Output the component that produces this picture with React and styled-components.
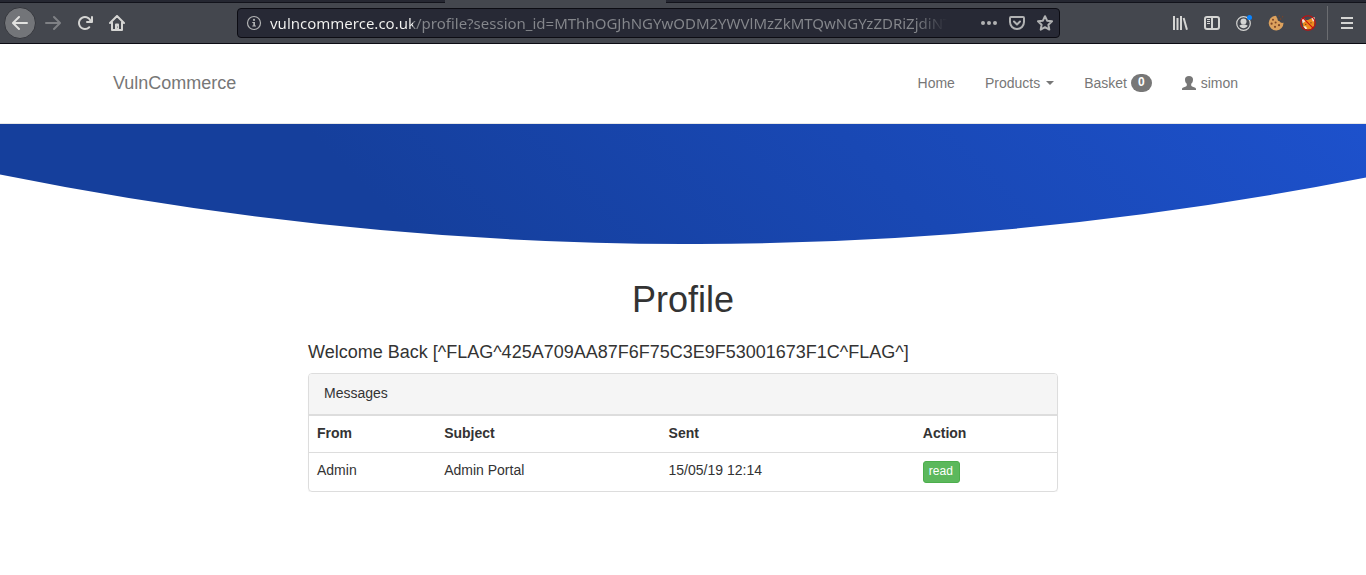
import React from 'react';
import styled, { createGlobalStyle, css } from 'styled-components';

const GlobalStyle = createGlobalStyle`
  *, *::before, *::after { box-sizing: border-box; }
  body {
    margin: 0;
    background: #fff;
    color: #333;
    font-family: "Liberation Sans", Arial, sans-serif;
    font-size: 14px;
    line-height: 20px;
  }
`;

/* ---------- browser chrome ---------- */

const TabStrip = styled.div`
  display: flex;
  height: 3px;
  background: #44474e;
`;

const TabEdge = styled.div`
  width: ${(p) => p.$width || 'auto'};
  flex: ${(p) => (p.$width ? '0 0 auto' : '1')};
  background: ${(p) => (p.$active ? '#44474e' : '#252731')};
  border-bottom: ${(p) => (p.$active ? 'none' : '1px solid #12131b')};
`;

const Toolbar = styled.div`
  display: flex;
  align-items: center;
  height: 41px;
  padding: 0 3px 0 4px;
  background: #44474e;
  border-bottom: 1px solid #0c0c13;
`;

const ToolButton = styled.button`
  display: flex;
  align-items: center;
  justify-content: center;
  flex: none;
  width: 32px;
  height: 32px;
  padding: 0;
  border: 0;
  background: none;
  color: ${(p) => (p.$dim ? '#7f8185' : '#d5d5d3')};
  ${(p) =>
    p.$round &&
    css`
      border: 1px solid #35373d;
      border-radius: 50%;
      background: #737579;
      color: #e2e2e0;
    `}
`;

const NavButtons = styled.div`
  display: flex;
  flex: none;
  margin-right: 104px;
  & > :first-child { margin-right: 1px; }
`;

const AddressBar = styled.form`
  display: flex;
  align-items: center;
  flex: 1;
  min-width: 0;
  height: 30px;
  margin: 0 104px 0 0;
  padding: 0 0 0 8px;
  border: 1px solid #0c0c13;
  border-radius: 4px;
  background: #272935;
`;

const AddressInput = styled.input`
  flex: 1;
  min-width: 0;
  height: 28px;
  margin: 0 28px 0 8px;
  padding: 0;
  border: 0;
  outline: 0;
  font: 15px/28px "Noto Sans", sans-serif;
  color: #f4f4f2;
  background: linear-gradient(90deg, #f4f4f2 143px, #85878c 143px, #85878c calc(100% - 32px), #272935);
  background-clip: text;
  -webkit-text-fill-color: transparent;
`;

const AddressAction = styled.button`
  display: flex;
  align-items: center;
  justify-content: center;
  flex: none;
  width: ${(p) => (p.$narrow ? '16px' : '28px')};
  height: 28px;
  padding: 0;
  border: 0;
  background: none;
  color: #b1b2b3;
`;

const ToolGroup = styled.div`
  display: flex;
  align-items: center;
  flex: none;
`;

const Separator = styled.span`
  width: 1px;
  height: 34px;
  margin: 0 3px;
  background: #6b6d71;
`;

const Icon = ({ children, ...rest }) => (
  <svg width="16" height="16" viewBox="0 0 16 16" fill="currentColor" aria-hidden="true" {...rest}>
    {children}
  </svg>
);

const ArrowIcon = ({ flip }) => (
  <Icon>
    <path
      transform={flip ? 'translate(16 0) scale(-1 1)' : undefined}
      d="M15 7H3.414l4.293-4.293a1 1 0 0 0-1.414-1.414l-6 6a1 1 0 0 0 0 1.414l6 6a1 1 0 0 0 1.414-1.414L3.414 9H15a1 1 0 0 0 0-2z"
    />
  </Icon>
);

const ReloadIcon = () => (
  <Icon>
    <path d="M15 1a1 1 0 0 0-1 1v2.418A6.995 6.995 0 1 0 8 15a6.954 6.954 0 0 0 4.95-2.05 1 1 0 0 0-1.414-1.414A5.019 5.019 0 1 1 12.549 6H10a1 1 0 0 0 0 2h5a1 1 0 0 0 1-1V2a1 1 0 0 0-1-1z" />
  </Icon>
);

const HomeIcon = () => (
  <Icon fill="none" stroke="currentColor" strokeWidth="2" strokeLinecap="round" strokeLinejoin="round">
    <path d="M1 8l7-7 7 7M3 7.500V15h10V7.500" />
    <path d="M7 14.500V9.500h2V14.500" strokeWidth="2" />
    <circle cx="8.500" cy="12" r=".5" fill="#44474e" stroke="none" />
  </Icon>
);

const InfoIcon = () => (
  <Icon>
    <circle cx="8" cy="8" r="6.500" fill="none" stroke="currentColor" strokeWidth="1.200" />
    <circle cx="8" cy="4.900" r="1.100" />
    <path d="M6.300 7H9v3.500h1v1H6.300v-1h1V8h-1z" />
  </Icon>
);

const DotsIcon = () => (
  <Icon>
    <circle cx="2" cy="8" r="2" />
    <circle cx="8" cy="8" r="2" />
    <circle cx="14" cy="8" r="2" />
  </Icon>
);

const PocketIcon = () => (
  <Icon fill="none" stroke="currentColor" strokeWidth="2" strokeLinecap="round" strokeLinejoin="round">
    <path d="M2 2h12a1 1 0 0 1 1 1v4a7 7 0 0 1-14 0V3a1 1 0 0 1 1-1z" />
    <path d="M5 6.500l3 3 3-3" />
  </Icon>
);

const StarIcon = () => (
  <Icon fill="none" stroke="currentColor" strokeWidth="2" strokeLinejoin="round">
    <path d="M8 1.200l2.100 4.500 4.900.6-3.600 3.400.9 4.900L8 12.200l-4.300 2.400.9-4.900L1 6.300l4.900-.6z" />
  </Icon>
);

const LibraryIcon = () => (
  <Icon>
    <path d="M1 1h2v14H1zM4.500 3h2v12h-2zM8 1h2v14H8z" />
    <path d="M10.700 3.300l1.900-.6 3.300 11.700-1.900.6z" />
  </Icon>
);

const SidebarIcon = () => (
  <Icon fill="none" stroke="currentColor" strokeWidth="2">
    <rect x="1" y="2" width="14" height="12" rx="2" />
    <path d="M8 2v12" strokeWidth="2" />
    <path d="M3 4.500h3M3 6.500h3M3 8.500h3" strokeWidth="1" />
  </Icon>
);

const AccountIcon = () => (
  <Icon>
    <circle cx="7.500" cy="8.500" r="6.800" fill="none" stroke="currentColor" strokeWidth="1.200" />
    <circle cx="7.500" cy="6.500" r="3" />
    <path d="M3.300 10.800c1-.9 1.800-1 2.700-1.300h3c.9.300 1.700.4 2.700 1.300-.9 1.500-2.400 2.400-4.200 2.400s-3.300-.9-4.200-2.400z" />
    <circle cx="13.500" cy="2.500" r="2.500" fill="#0a84ff" />
  </Icon>
);

const CookieIcon = () => (
  <Icon>
    <path
      d="M7.500.700C9 1.300 8.500 3 9.600 3.800c-.3 2 1 2.600 2 2.500.7 1.500 2.200 1.900 3.900 1.500A7.400 7.400 0 1 1 7.500.700z"
      fill="#dca15d"
    />
    <g fill="#7d4526">
      <circle cx="5" cy="4.800" r="1" />
      <circle cx="3.600" cy="8.700" r="1.100" />
      <circle cx="7.600" cy="7.500" r="1" />
      <circle cx="7" cy="11.800" r="1.100" />
      <circle cx="11" cy="10.200" r="1.100" />
      <circle cx="11.300" cy="1" r=".8" />
      <circle cx="14.600" cy="1.700" r=".7" />
      <circle cx="12.600" cy="4" r=".8" />
    </g>
  </Icon>
);

const FoxIcon = () => (
  <Icon>
    <path d="M2.500 7.500C4 5.500 6 5 8 5l3-1.500 2.500-.5 1 4-.5 4-3 3-4 .5L3.500 12z" fill="#ee8b1d" />
    <path d="M1.500 3.500l3 .3 1.500 2-3.300 2.400zM11.500 3l3-1 .3 4-2 .5z" fill="#f3e4d3" />
    <path d="M3.500 11.200l2.500.3 1.200 2.300-2 .2z" fill="#fff2df" />
    <circle cx="5.800" cy="9.300" r=".6" fill="#4a2b12" />
    <circle cx="11" cy="7.800" r=".6" fill="#4a2b12" />
    <g fill="none" stroke="#c80d0d" strokeWidth="1.100">
      <circle cx="8" cy="8" r="7.300" />
      <path d="M2.900 2.900l10.200 10.200" />
    </g>
  </Icon>
);

const MenuIcon = () => (
  <Icon>
    <path d="M2 2h12v2H2zM2 7h12v2H2zM2 12h12v2H2z" />
  </Icon>
);

/* ---------- shop page ---------- */

const SiteHeader = styled.header`
  border-bottom: 1px solid #e7e7e7;
`;

const Container = styled.div`
  display: flex;
  align-items: center;
  justify-content: space-between;
  max-width: 1170px;
  min-height: 79px;
  margin: 0 auto;
  padding: 0 15px 2px;
`;

const Brand = styled.a`
  color: #777;
  font-size: 18px;
  text-decoration: none;
`;

const SiteNav = styled.nav`
  display: flex;
`;

const NavLink = styled.a`
  display: flex;
  align-items: center;
  gap: ${(p) => p.$gap || '4px'};
  padding: 10px 15px;
  color: #777;
  text-decoration: none;
`;

const Caret = styled.span`
  border-top: 4px solid #777;
  border-left: 4px solid transparent;
  border-right: 4px solid transparent;
`;

const Badge = styled.span`
  height: 18px;
  padding: 0 7px;
  border-radius: 10px;
  background: #777;
  color: #fff;
  font-size: 12px;
  font-weight: 700;
  line-height: 16px;
`;

const Banner = styled.svg`
  display: block;
  width: 100%;
  height: 120px;
`;

const Main = styled.main`
  max-width: 750px;
  margin: 0 auto;
`;

const Title = styled.h1`
  margin: 36px 0 0;
  font-size: 36px;
  font-weight: 400;
  line-height: 40px;
  text-align: center;
`;

const Welcome = styled.h4`
  margin: 22px 0 11px;
  font-size: 18px;
  font-weight: 400;
  line-height: 20px;
  overflow-wrap: anywhere;
`;

const Panel = styled.section`
  border: 1px solid #ddd;
  border-radius: 4px;
  overflow: hidden;
  box-shadow: 0 1px 1px rgba(0, 0, 0, 0.05);
`;

const PanelHeading = styled.div`
  padding: 9px 15px 11px;
  border-bottom: 1px solid #ddd;
  background: #f5f5f5;
`;

const Table = styled.table`
  width: 100%;
  border-collapse: separate;
  border-spacing: 0;
`;

const cell = css`
  padding: 7px 8px 9px;
  border-top: 1px solid #ddd;
  text-align: left;
  vertical-align: top;
`;

const HeadCell = styled.th`
  ${cell}
  width: ${(p) => p.$width};
`;

const Cell = styled.td`
  ${cell}
`;

const ReadLink = styled.a`
  display: block;
  width: fit-content;
  margin: 1px 0 -1px;
  padding: 0 6px 2px 5px;
  border: 1px solid #4cae4c;
  border-radius: 3px;
  background: #5cb85c;
  color: #fff;
  font-size: 12px;
  line-height: 18px;
  text-decoration: none;
`;

const messages = [{ from: 'Admin', subject: 'Admin Portal', sent: '15/05/19 12:14' }];

export default function App() {
  return (
    <>
      <GlobalStyle />
      <TabStrip>
        <TabEdge $width="445px" />
        <TabEdge $width="221px" $active />
        <TabEdge />
      </TabStrip>
      <Toolbar>
        <NavButtons>
          <ToolButton $round aria-label="Back"><ArrowIcon /></ToolButton>
          <ToolButton $dim aria-label="Forward"><ArrowIcon flip /></ToolButton>
          <ToolButton aria-label="Reload"><ReloadIcon /></ToolButton>
          <ToolButton aria-label="Home"><HomeIcon /></ToolButton>
        </NavButtons>
        <AddressBar onSubmit={(e) => e.preventDefault()}>
          <AddressAction $narrow type="button" aria-label="Site information"><InfoIcon /></AddressAction>
          <AddressInput
            type="text"
            aria-label="Address"
            defaultValue="vulncommerce.co.uk/profile?session_id=MThhOGJhNGYwODM2YWVlMzZkMTQwNGYzZDRiZjdiNTd"
          />
          <AddressAction type="button" aria-label="Page actions"><DotsIcon /></AddressAction>
          <AddressAction type="button" aria-label="Save to Pocket"><PocketIcon /></AddressAction>
          <AddressAction type="button" aria-label="Bookmark this page"><StarIcon /></AddressAction>
        </AddressBar>
        <ToolGroup>
          <ToolButton aria-label="Library"><LibraryIcon /></ToolButton>
          <ToolButton aria-label="Sidebars"><SidebarIcon /></ToolButton>
          <ToolButton aria-label="Account"><AccountIcon /></ToolButton>
          <ToolButton aria-label="Cookies"><CookieIcon /></ToolButton>
          <ToolButton aria-label="Proxy"><FoxIcon /></ToolButton>
          <Separator />
          <ToolButton aria-label="Menu"><MenuIcon /></ToolButton>
        </ToolGroup>
      </Toolbar>

      <SiteHeader>
        <Container>
          <Brand href="#">VulnCommerce</Brand>
          <SiteNav>
            <NavLink href="#">Home</NavLink>
            <NavLink href="#" $gap="6px">Products <Caret /></NavLink>
            <NavLink href="#">Basket <Badge>0</Badge></NavLink>
            <NavLink href="#">
              <svg width="15" height="14" viewBox="0 0 15 14" fill="#777" aria-hidden="true">
                <path d="M7 0c2.600 0 4 1.300 4 3.300 0 1.900-.5 3.600-1.800 4.500v1.400c0 .6.300.9.900 1.200l2.600 1.100c.9.400 1.300.8 1.300 1.500v1H0v-1c0-.7.400-1.100 1.300-1.500l2.600-1.100c.6-.3.900-.6.900-1.200V7.800C3.500 6.900 3 5.200 3 3.300 3 1.300 4.400 0 7 0z" />
              </svg>
              simon
            </NavLink>
          </SiteNav>
        </Container>
      </SiteHeader>
      <Banner viewBox="0 0 1366 120" preserveAspectRatio="none" aria-hidden="true">
        <defs>
          <linearGradient id="banner" gradientUnits="userSpaceOnUse" x1="300" y1="0" x2="833" y2="-533">
            <stop offset="0" stopColor="#153f9c" />
            <stop offset="1" stopColor="#1d51cc" />
          </linearGradient>
        </defs>
        <path d="M0 0H1366V53.500Q683 188 0 50.500Z" fill="url(#banner)" />
      </Banner>

      <Main>
        <Title>Profile</Title>
        <Welcome>Welcome Back [^FLAG^425A709AA87F6F75C3E9F53001673F1C^FLAG^]</Welcome>
        <Panel>
          <PanelHeading>Messages</PanelHeading>
          <Table>
            <thead>
              <tr>
                <HeadCell scope="col" $width="17%">From</HeadCell>
                <HeadCell scope="col" $width="30%">Subject</HeadCell>
                <HeadCell scope="col" $width="34%">Sent</HeadCell>
                <HeadCell scope="col" $width="19%">Action</HeadCell>
              </tr>
            </thead>
            <tbody>
              {messages.map((m) => (
                <tr key={m.subject}>
                  <Cell>{m.from}</Cell>
                  <Cell>{m.subject}</Cell>
                  <Cell>{m.sent}</Cell>
                  <Cell><ReadLink href="#">read</ReadLink></Cell>
                </tr>
              ))}
            </tbody>
          </Table>
        </Panel>
      </Main>
    </>
  );
}
